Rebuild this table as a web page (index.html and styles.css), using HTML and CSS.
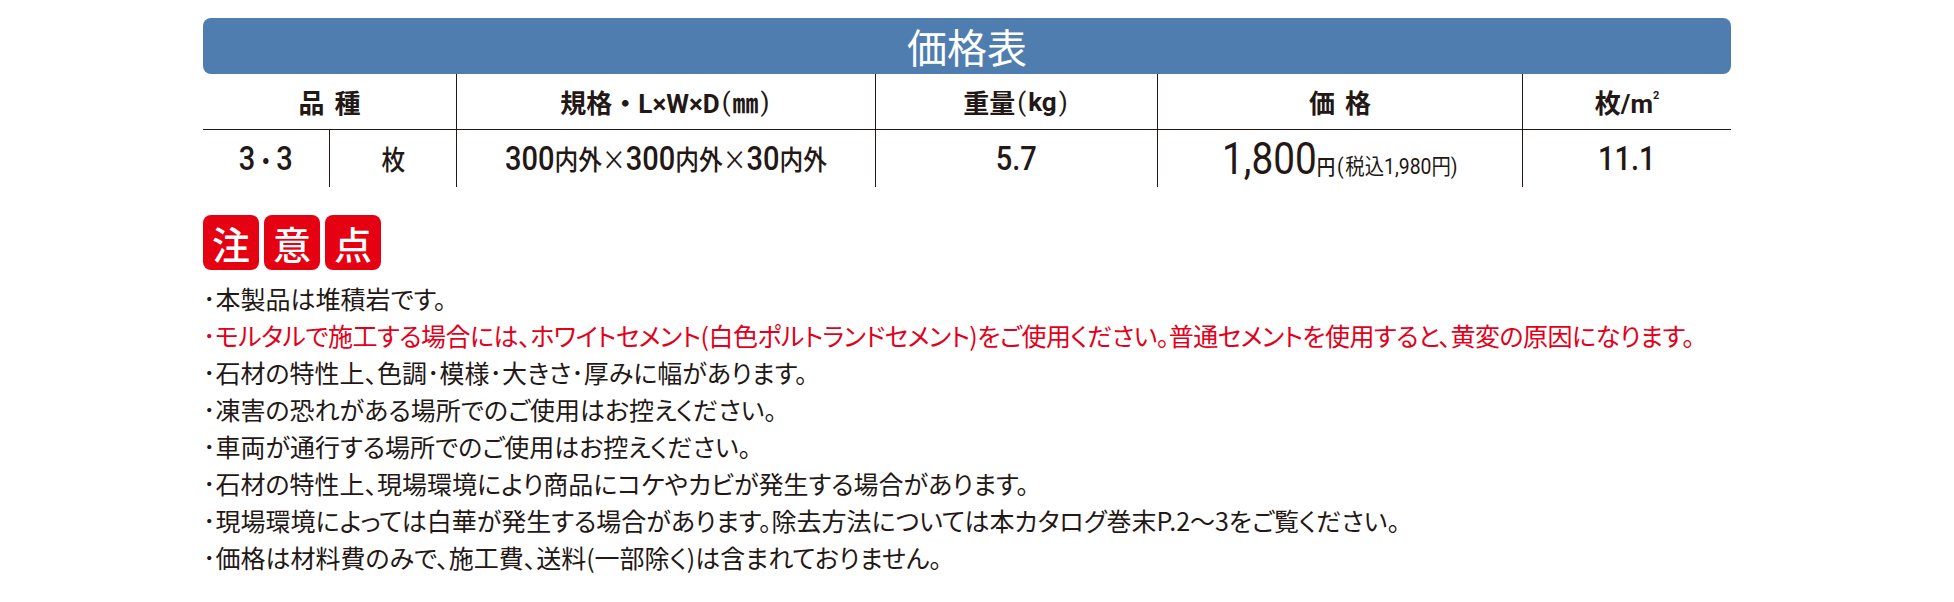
FILE: index.html
```html
<!DOCTYPE html>
<html lang="ja">
<head>
<meta charset="utf-8">
<title>価格表</title>
<link rel="stylesheet" href="styles.css">
</head>
<body>
<div class="sheet">
  <section class="price">
    <h1 class="price-title">価格表</h1>
    <div class="price-grid">
      <div class="th th-first"><span class="spaced">品種</span></div>
      <div class="th">規格・L×W×D<span class="par">(</span>㎜<span class="par">)</span></div>
      <div class="th">重量<span class="par">(</span>kg<span class="par">)</span></div>
      <div class="th"><span class="spaced">価格</span></div>
      <div class="th">枚/m<span class="sup">2</span></div>

      <div class="td td-kind">
        <div class="kind-a"><span class="cx"><span class="n">3</span><span class="dot">・</span><span class="n">3</span></span></div>
        <div class="kind-b"><span class="cx">枚</span></div>
      </div>
      <div class="td"><span class="cx"><span class="n">300</span>内外<span class="x">×</span><span class="n">300</span>内外<span class="x">×</span><span class="n">30</span>内外</span></div>
      <div class="td"><span class="cx"><span class="n">5.7</span></span></div>
      <div class="td"><span class="cx"><span class="big">1,800</span><span class="yen">円</span><span class="tax"><span class="par">(</span>税込1,980円)</span></span></div>
      <div class="td"><span class="cx"><span class="n">11.1</span></span></div>
    </div>
  </section>

  <section class="notes">
    <div class="badge"><span class="badge-ch">注</span><span class="badge-ch">意</span><span class="badge-ch">点</span></div>
    <ul class="note-list">
      <li>･本製品は堆積岩です。</li>
      <li class="warn">･モルタルで施工する場合には、ホワイトセメント(白色ポルトランドセメント)をご使用ください。普通セメントを使用すると、黄変の原因になります。</li>
      <li>･石材の特性上、色調･模様･大きさ･厚みに幅があります。</li>
      <li>･凍害の恐れがある場所でのご使用はお控えください。</li>
      <li>･車両が通行する場所でのご使用はお控えください。</li>
      <li>･石材の特性上、現場環境により商品にコケやカビが発生する場合があります。</li>
      <li>･現場環境によっては白華が発生する場合があります。除去方法については本カタログ巻末P.2～3をご覧ください。</li>
      <li>･価格は材料費のみで、施工費、送料(一部除く)は含まれておりません。</li>
    </ul>
  </section>
</div>
</body>
</html>
```

FILE: styles.css
```css
html, body {
  margin: 0;
  padding: 0;
  background: #ffffff;
}

body {
  font-family: "Noto Sans CJK JP", sans-serif;
  color: #231815;
}

.sheet {
  width: 1528px;
  padding: 18px 0 0 203px;
}

/* ---------- price table ---------- */
.price-title {
  margin: 0;
  height: 56px;
  background: #4f7db0;
  border-radius: 8px;
  color: #ffffff;
  font-size: 40px;
  font-weight: 400;
  line-height: 1;
  display: flex;
  align-items: center;
  justify-content: center;
}

.price-grid {
  display: grid;
  grid-template-columns: 253px 419px 282px 365px 209px;
  grid-template-rows: 56px 57px;
  font-family: Roboto, "Noto Sans CJK JP", sans-serif;
}

.th,
.td {
  box-sizing: border-box;
  display: flex;
  align-items: center;
  justify-content: center;
  border-left: 1.5px solid #231815;
  white-space: nowrap;
}

.th {
  border-bottom: 1.5px solid #231815;
  font-size: 26px;
  font-weight: 700;
}

.th-first,
.td-kind {
  border-left: none;
}

.spaced {
  letter-spacing: 10px;
  margin-right: -10px;
}

.par {
  margin: 0 2px;
  font-weight: 400;
}

.sup {
  font-size: 11px;
  align-self: flex-start;
  margin-top: 15px;
}

.td {
  font-size: 27px;
  font-weight: 500;
}

.td-kind {
  display: grid;
  grid-template-columns: 126px 127px;
}

.kind-a,
.kind-b {
  display: flex;
  align-items: center;
  justify-content: center;
  height: 100%;
}

.kind-b {
  border-left: 1.5px solid #231815;
}

.cx {
  display: inline-block;
  transform: scaleX(0.88);
}

.n {
  font-size: 33px;
}

.dot {
  font-family: "Noto Sans CJK JP", sans-serif;
  font-size: 24px;
  font-weight: 700;
}

.x {
  font-family: "Noto Sans CJK JP", sans-serif;
  font-weight: 400;
}

.big {
  font-size: 44px;
  font-weight: 400;
}

.yen {
  font-size: 21px;
}

.tax {
  font-size: 22px;
  font-weight: 400;
}

/* ---------- notes ---------- */
.notes {
  margin-top: 28px;
}

.badge {
  display: flex;
  gap: 5px;
}

.badge-ch {
  width: 56px;
  height: 55px;
  border-radius: 8px;
  background: #e50012;
  color: #ffffff;
  font-size: 38px;
  font-weight: 500;
  line-height: 1;
  display: flex;
  align-items: center;
  justify-content: center;
}

.note-list {
  list-style: none;
  margin: 10px 0 0;
  padding: 0;
  font-size: 25px;
  line-height: 37px;
  font-feature-settings: "palt";
  white-space: nowrap;
}

.warn {
  color: #e2001a;
  letter-spacing: -0.5px;
}
```
